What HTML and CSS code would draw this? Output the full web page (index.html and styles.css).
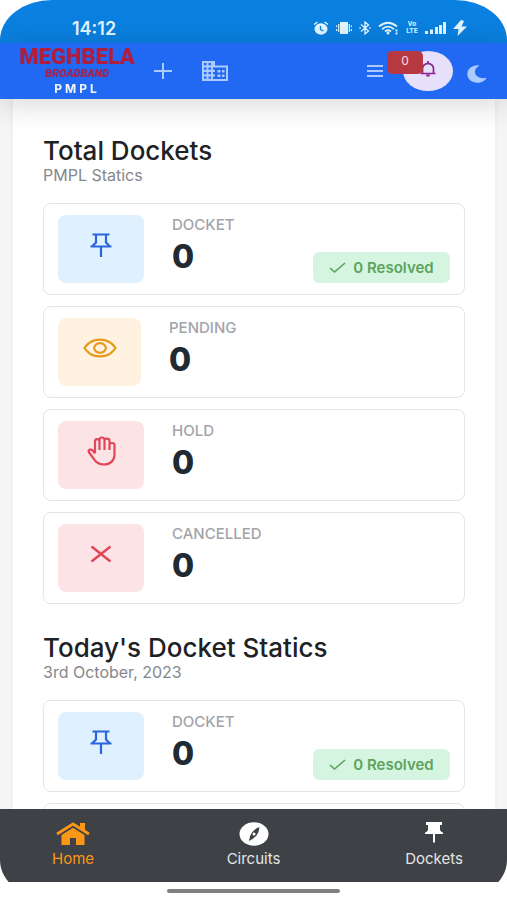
FILE: index.html
```html
<!DOCTYPE html>
<html lang="en">
<head>
<meta charset="utf-8">
<meta name="viewport" content="width=device-width, initial-scale=1">
<title>Meghbela Broadband PMPL</title>
<link rel="stylesheet" href="styles.css">
</head>
<body>
<svg class="sprite" aria-hidden="true">
  <symbol id="pin" viewBox="0 0 22 24" preserveAspectRatio="none"><path d="M2.500 1.500h17M6 2v7.500L2.500 13M16 2v7.500l3.500 3.500M.5 13.500h21M11 13.500V24" fill="none" stroke="currentColor" stroke-width="2.200"/></symbol>
  <symbol id="check" viewBox="0 0 17 11"><path d="M1 6l4.500 4L16 1" fill="none" stroke="currentColor" stroke-width="1.600"/></symbol>
</svg>
<div class="app">
  <div class="status">
    <span class="clock">14:12</span>
    <div class="status-icons">
      <svg width="16" height="14" viewBox="0 0 16 14"><ellipse cx="8" cy="8" rx="6.500" ry="5.800" fill="currentColor"/><path d="M1 3.500L4.500 1M15 3.500L11.500 1" stroke="currentColor" stroke-width="1.500"/><path d="M7.500 5v3.500l3 1.500" fill="none" stroke="#0a80e0" stroke-width="1.300"/></svg>
      <svg width="16" height="12" viewBox="0 0 16 12"><path d="M4 0h8v12H4z" fill="currentColor"/><path d="M2.700 2v8M13.300 2v8M.6 3.500v1.500M.6 7v2M15.400 3.500v1.500M15.400 7v2" stroke="currentColor" stroke-width="1.200"/></svg>
      <svg width="12" height="14" viewBox="0 0 12 14"><path d="M2 3.500l7.500 6.500L6 13V1l3.500 3L2 10.500M.3 7h1.500M10.200 7h1.500" fill="none" stroke="currentColor" stroke-width="1.300"/></svg>
      <svg width="21" height="14" viewBox="0 0 21 14"><path d="M1 5.500Q10 -2 19 5.500M4 8.200Q10 3 16 8.200M7 10.500q3-2.500 6 0" fill="none" stroke="currentColor" stroke-width="1.800"/><circle cx="10" cy="12" r="1.500" fill="currentColor"/><path d="M18.500 8.500v2M18.500 11.500v2" stroke="currentColor" stroke-width="2"/></svg>
      <span class="volte">Vo<br>LTE</span>
      <svg width="21" height="12" viewBox="0 0 21 12"><path d="M0 9h3v3H0zM5 7.500h3V12H5zM10 5h3v7h-3zM14 3h3v9h-3zM18 0h3v12h-3z" fill="currentColor"/></svg>
      <svg width="14" height="16" viewBox="0 0 14 16"><path d="M8 0L0 9h5.500L4.500 16 14 6.500H8.500L11 1z" fill="currentColor"/></svg>
    </div>
  </div>
  <header class="header">
    <a class="brand" href="#home">
      <span class="brand-name">MEGHBELA</span>
      <span class="brand-sub">BROADBAND</span>
      <span class="brand-unit">PMPL</span>
    </a>
    <button class="icon-btn" aria-label="Add"><svg width="18" height="16" viewBox="0 0 18 16"><path d="M9 0v16M0 8h18" stroke="currentColor" stroke-width="2"/></svg></button>
    <button class="icon-btn building" aria-label="Offices"><svg width="26" height="20" viewBox="0 0 26 20"><path fill="currentColor" fill-rule="evenodd" d="M0 0h13v4.500h13V20H0zM2 2v2.200h2.500V2zM6.500 2v2.200H9V2zM2 6.500v2.200h2.500V6.500zM6.500 6.500v2.200H9V6.500zM2 11v2.200h2.500V11zM6.500 11v2.200H9V11zM2 15.500v2.200h2.500v-2.200zM6.500 15.500v2.200H9v-2.200zM11 6.500v2.200h2V11h-2v2.200h2v2.300h-2v2.500h13V6.500z"/><path d="M15.500 9h3v2.500h-3zM20 9h2.500v2.500H20zM15.500 13.500h3V16h-3zM20 13.500h2.500V16H20z" fill="currentColor"/></svg></button>
    <span class="spacer"></span>
    <button class="icon-btn" aria-label="Menu"><svg width="16" height="12" viewBox="0 0 16 12"><path d="M0 1h16M0 6h16M0 11h16" stroke="currentColor" stroke-width="2"/></svg></button>
    <button class="bell" aria-label="Notifications">
      <svg width="18" height="16" viewBox="0 0 18 16"><path d="M1.500 12.500h15M3.500 12.500V7.500Q3.700 3 9 2.300q5.300.7 5.500 5.200v5M9 0v2.300" fill="none" stroke="currentColor" stroke-width="1.700"/><path d="M6.800 13.500h4.400q-.4 2.200-2.200 2.200t-2.200-2.200z" fill="currentColor"/></svg>
      <span class="count">0</span>
    </button>
    <button class="icon-btn moon" aria-label="Dark mode"><svg width="20" height="18" viewBox="0 0 20 18"><path d="M9 .4C4 .8.300 4.500.300 9c0 5 4.400 8.700 9.900 8.700 4.200 0 7.800-1.600 9.300-5-5.500 1.500-10.500-.7-11.400-4.700C7.600 4.800 9.600 2 12.500.8 11.500.4 10.200.300 9 .4z" fill="currentColor"/></svg></button>
  </header>
  <main class="main">
    <div class="panel">
      <section>
        <h2 class="title">Total Dockets</h2>
        <p class="subtitle">PMPL Statics</p>
        <div class="cards">
          <article class="card">
            <div class="tile blue"><svg width="22" height="24"><use href="#pin"/></svg></div>
            <div class="stat"><span class="label">DOCKET</span><span class="value">0</span></div>
            <span class="resolved"><svg width="17" height="11"><use href="#check"/></svg>0 Resolved</span>
          </article>
          <article class="card">
            <div class="tile orange"><svg width="34" height="20" viewBox="0 0 34 20"><path d="M1.500 10C5 4.500 10.500 1.600 17 1.600S29 4.500 32.500 10C29 15.500 23.500 18.400 17 18.400S5 15.500 1.500 10z" fill="none" stroke="currentColor" stroke-width="2.200"/><ellipse cx="17" cy="10" rx="5.800" ry="4.800" fill="none" stroke="currentColor" stroke-width="2.200"/></svg></div>
            <div class="stat"><span class="label">PENDING</span><span class="value">0</span></div>
          </article>
          <article class="card">
            <div class="tile red"><svg width="29" height="30" viewBox="0 0 29 30"><path d="M8 17V5.500Q8 3.200 10 3.200T12.500 5.500V14M12.500 14V4Q12.500 1.500 15 1.500T17.500 4V14M17.500 14V5Q17.500 2.700 20 2.700T22.500 5V14M22.500 14V9Q22.500 7 25 7T27.500 9V18.500C27.500 25 23 28.500 17 28.500 11 28.500 8.500 26 6.500 22.500L1.800 16Q1 14 3 13.600 5 13.300 6.200 15L8 17.500" fill="none" stroke="currentColor" stroke-width="2.200" stroke-linejoin="round"/></svg></div>
            <div class="stat"><span class="label">HOLD</span><span class="value">0</span></div>
          </article>
          <article class="card">
            <div class="tile red"><svg width="22" height="18" viewBox="0 0 22 18"><path d="M1.500 1.500l19 15M20.500 1.500l-19 15" stroke="currentColor" stroke-width="2.400"/></svg></div>
            <div class="stat"><span class="label">CANCELLED</span><span class="value">0</span></div>
          </article>
        </div>
      </section>
      <section>
        <h2 class="title">Today's Docket Statics</h2>
        <p class="subtitle">3rd October, 2023</p>
        <div class="cards">
          <article class="card">
            <div class="tile blue"><svg width="22" height="24"><use href="#pin"/></svg></div>
            <div class="stat"><span class="label">DOCKET</span><span class="value">0</span></div>
            <span class="resolved"><svg width="17" height="11"><use href="#check"/></svg>0 Resolved</span>
          </article>
          <article class="card"></article>
        </div>
      </section>
    </div>
  </main>
  <nav class="nav">
    <a class="tab active" href="#home"><svg width="34" height="24" viewBox="0 0 34 24"><path d="M1 12L17 2l16 10" fill="none" stroke="currentColor" stroke-width="2.800"/><path d="M24 1h5v9l-5-3zM5.500 13L17 5.800 28.500 13v9.500q0 .5-.5.500H20v-7h-6v7H6q-.5 0-.5-.5z" fill="currentColor"/></svg>Home</a>
    <a class="tab" href="#circuits"><svg width="30" height="24" viewBox="0 0 30 24"><ellipse cx="15" cy="12" rx="14.500" ry="11.800" fill="currentColor"/><path d="M20.500 5q-.5 5.500-3 8.500-3 3.500-7.500 5.500.5-5.500 3-8.500 3-4 7.500-5.500z" fill="#3e4146"/><circle cx="15" cy="12" r="1.500" fill="currentColor"/></svg>Circuits</a>
    <a class="tab" href="#dockets"><svg class="pin-solid" width="18" height="21" viewBox="0 0 18 21"><path d="M1 0h16v3h-2v5q1 2 3 2.500V12h-8v8l-1 1-1-1v-8H0v-1.500Q2 10 3 8V3H1z" fill="currentColor"/></svg>Dockets</a>
  </nav>
  <div class="gesture"><span class="gesture-bar"></span></div>
</div>
</body>
</html>
```

FILE: styles.css
```css
* { box-sizing: border-box; }
body { margin: 0; background: #fff; color: #212529; font-family: Inter, "Liberation Sans", sans-serif; }
button { border: 0; padding: 0; background: none; color: inherit; font: inherit; }
a { color: inherit; text-decoration: none; }
svg { display: block; flex: none; }
.sprite { position: absolute; width: 0; height: 0; }
.app { display: flex; flex-direction: column; height: 100vh; overflow: hidden; border-radius: 52px / 40px; }

.status { display: flex; align-items: center; justify-content: space-between; height: 43px; padding: 13px 40px 0 72px; background: #0a80e0; color: #e3f5ff; }
.clock { font-size: 18px; font-weight: 600; }
.status-icons { display: flex; align-items: center; gap: 7px; }
.volte { width: 12px; font: 700 7px/7px Roboto, sans-serif; text-align: center; }

.header { position: relative; z-index: 1; display: flex; align-items: center; height: 56px; padding: 0 20px; background: #2168f3; color: #aacbff; box-shadow: 0 4px 32px rgba(0, 0, 0, 0.18); }
.brand { display: flex; flex-direction: column; align-items: center; width: 114px; margin-right: 20px; }
.brand-name { color: #b01e3c; font: 900 22px/22px Roboto, sans-serif; }
.brand-sub { color: #a5224c; font: italic 900 11px/12px Roboto, sans-serif; }
.brand-unit { margin-top: 2px; color: #f2f6ff; font-size: 12px; line-height: 14px; font-weight: 700; letter-spacing: 3px; }
.building { margin-left: 30px; }
.spacer { flex: 1; }
.bell { position: relative; display: grid; place-items: center; width: 50px; height: 40px; margin: 0 14px 0 20px; border-radius: 50%; background: #e6e0fa; color: #8c2491; }
.bell svg { margin-bottom: 4px; }
.count { position: absolute; top: 0; left: -16px; width: 36px; height: 23px; border-radius: 5px; background: #b63942; color: #f9dfe4; font-size: 12px; line-height: 20px; }
.moon { margin-top: 6px; }

.main { flex: 1; min-height: 0; overflow-y: auto; scrollbar-width: none; padding: 0 12px 0 13px; background: #f5f5f5; }
.panel { padding: 36px 30px 22px; background: #fff; box-shadow: 0 0 6px rgba(0, 0, 0, 0.04); }
.title { margin: 0; color: #202124; font-size: 26px; line-height: 32px; font-weight: 500; }
.subtitle { margin: 0; color: #85878b; font-size: 16px; line-height: 16px; }
.cards { display: grid; gap: 11px; margin: 20px 0 28px; }
.card { display: flex; align-items: center; gap: 28px; min-height: 92px; padding: 11px 14px; border: 1px solid #e4e4e6; border-radius: 8px; background: #fff; }
.tile { display: grid; place-items: center; width: 86px; height: 68px; padding-bottom: 8px; border-radius: 8px; }
.blue { background: #dff0ff; color: #2b65d9; }
.orange { width: 83px; background: #fff2e0; color: #e59a1a; }
.red { background: #fbe3e6; color: #e14557; }
.stat { display: flex; flex-direction: column; align-self: flex-start; }
.label { color: #a3a4aa; font-size: 15px; line-height: 20px; font-weight: 500; }
.value { color: #212a32; font-size: 32px; line-height: 44px; font-weight: 800; }
.resolved { display: flex; align-items: center; justify-content: center; gap: 7px; align-self: flex-end; width: 137px; height: 31px; margin-left: auto; border-radius: 6px; background: #d5f5e0; color: #5ba35f; font-size: 15px; font-weight: 600; white-space: nowrap; }

.nav { display: flex; justify-content: space-between; height: 73px; padding: 13px 28px 0; background: #3e4146; color: #fff; }
.tab { display: flex; flex-direction: column; align-items: center; width: 90px; gap: 4px; color: #e4e5e6; font-size: 15px; line-height: 18px; }
.tab svg { color: #fff; }
.tab.active, .tab.active svg { color: #fb9716; }
.pin-solid { margin-bottom: 3px; }
.gesture { display: flex; justify-content: center; height: 18px; padding-top: 7px; background: #fff; }
.gesture-bar { width: 34%; height: 4px; border-radius: 2px; background: #808080; }
```
